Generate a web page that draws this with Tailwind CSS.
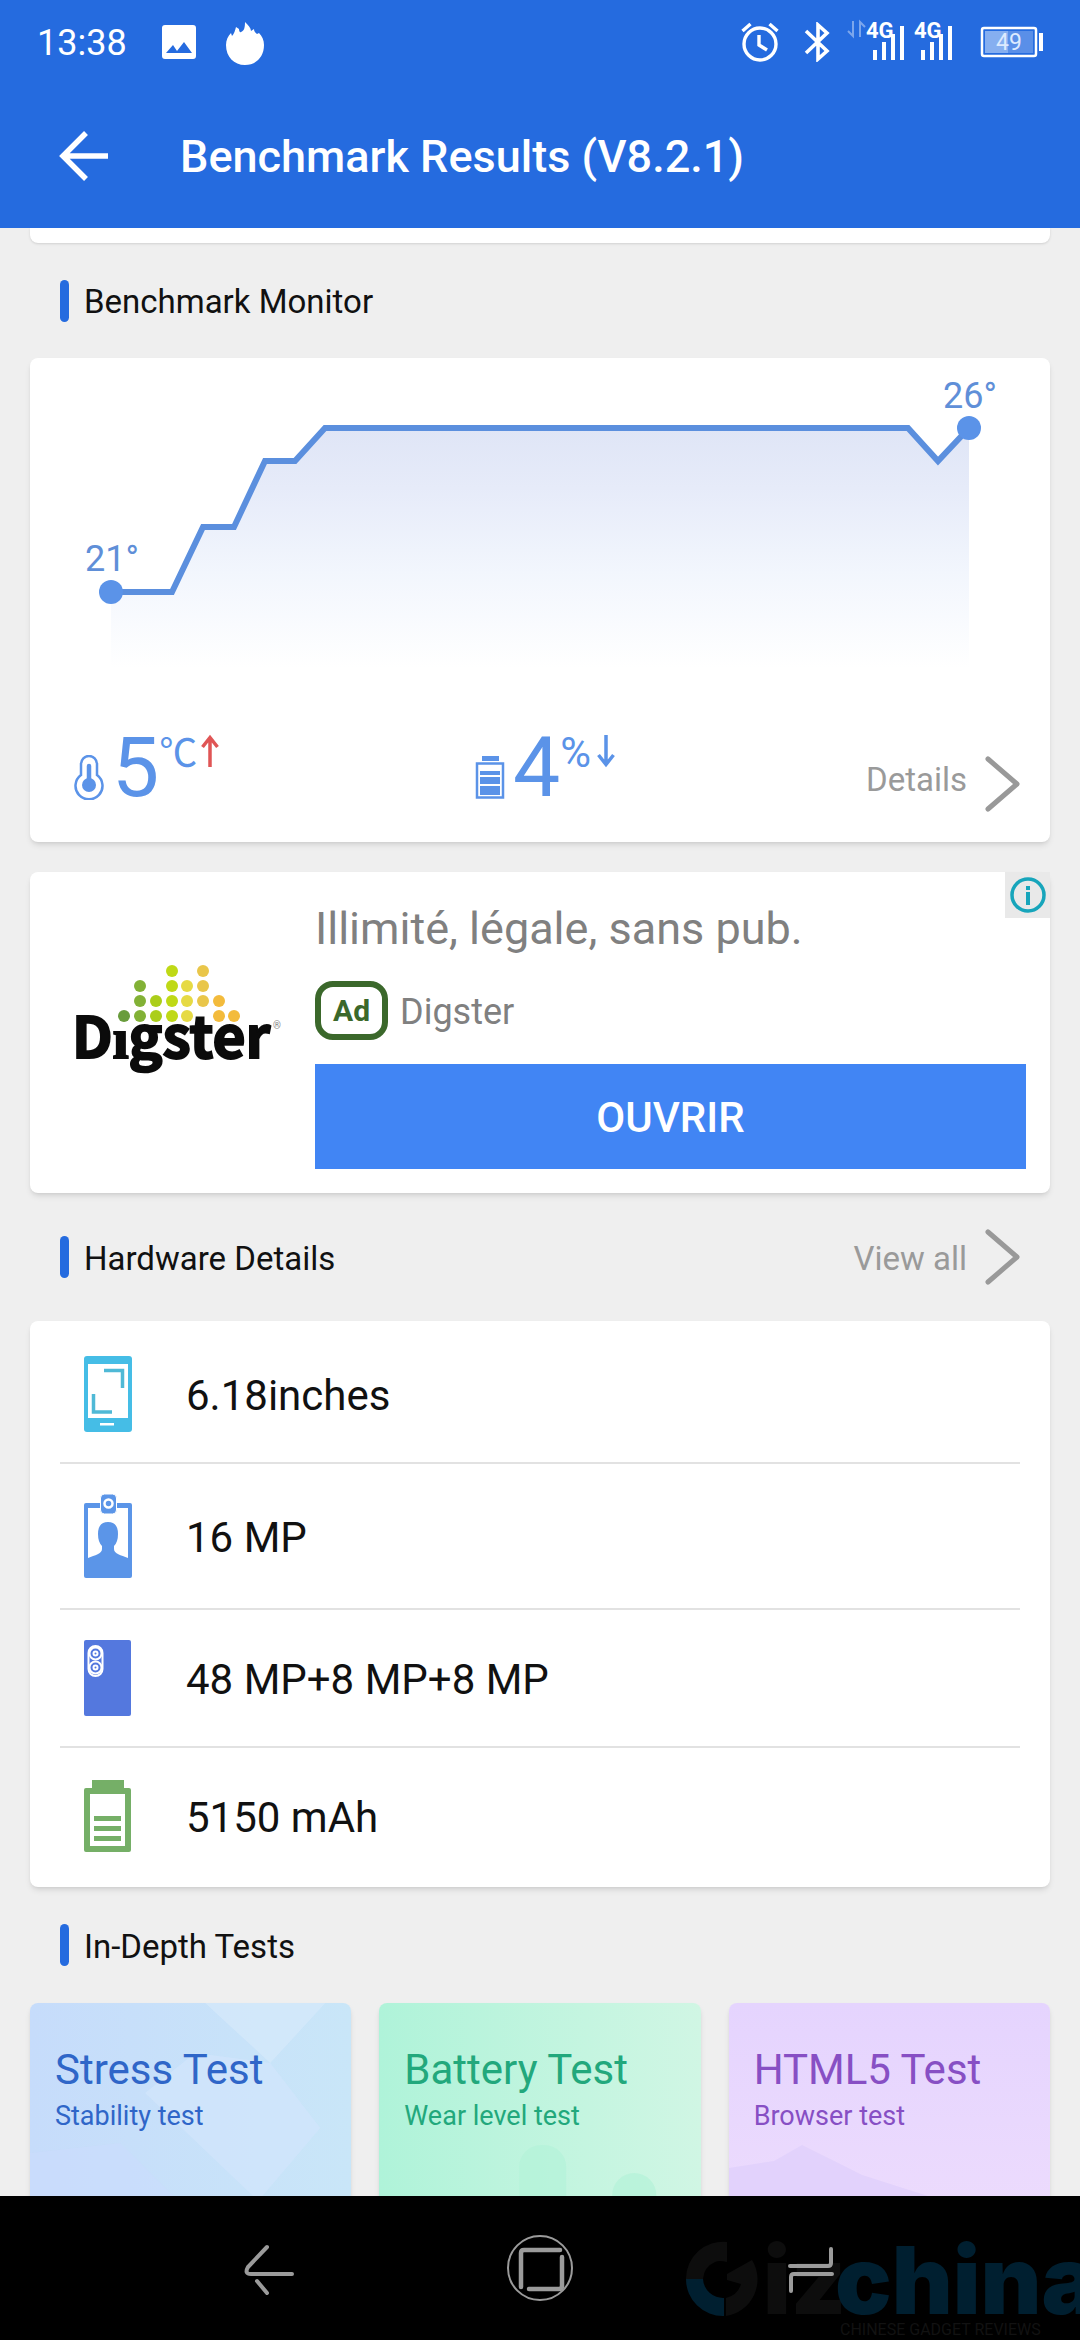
<!DOCTYPE html>
<html lang="en">
<head>
<meta charset="utf-8">
<meta name="viewport" content="width=device-width, initial-scale=1">
<title>Benchmark Results</title>
<script src="https://cdn.jsdelivr.net/npm/@tailwindcss/browser@4"></script>
</head>
<body class="flex h-screen flex-col overflow-hidden bg-[#efefef] font-[Roboto,'Noto_Sans_CJK_SC',sans-serif] text-[#111111]">

<header class="shrink-0 bg-[#256bdf] text-white">
  <!-- Status bar -->
  <div class="flex h-[84px] items-center pl-[37px] pr-[36px]">
    <span class="pt-[2px] text-[36px] leading-[44px]">13:38</span>
    <svg class="ml-[34px] h-[36px] w-[36px]" viewBox="0 0 36 36" aria-hidden="true"><path fill="#fff" fill-rule="evenodd" d="M4 1h28q3 0 3 3v28q0 3-3 3H4q-3 0-3-3V4q0-3 3-3zM5 29h26l-8-11-7 9-4-6z"/></svg>
    <svg class="ml-[28px] h-[46px] w-[40px]" viewBox="0 0 40 46" aria-hidden="true"><path fill="#fff" d="M20 46C9 46 1 38 1 26c0-5 2-9 5-12l1 3c2-2 3-5 4-9l3 2c0 2 1 4 2 3 3-1 4-4 4-10 3 3 6 6 6 9l3-2c0 3 2 4 3 5l2-1c3 3 5 7 5 12 0 12-8 20-19 20z"/></svg>
    <div class="ml-auto flex items-center">
      <svg class="h-[40px] w-[38px]" viewBox="0 0 38 40" fill="none" stroke="#fff" stroke-width="3.4" aria-hidden="true"><circle cx="19" cy="22" r="16"/><path d="M18 13v10l8 5M1.500 9l8-7M36.500 9l-8-7"/></svg>
      <svg class="ml-[24px] h-[40px] w-[28px]" viewBox="0 0 28 40" fill="none" stroke="#fff" stroke-width="3.6" aria-hidden="true"><path d="M3 9l21 20-9 8V3l9 8L3 31"/></svg>
      <svg class="ml-[15px] h-[44px] w-[106px] overflow-visible" viewBox="0 0 106 44" aria-hidden="true">
        <g fill="none" stroke="#fff" stroke-opacity=".4" stroke-width="2"><path d="M7 1v15l-5-5M14 17V2l5 5"/></g>
        <g fill="#fff"><text x="20" y="18" font-size="22" font-weight="700">4G</text><path d="M27 30h4v10h-4zM36 22h4v18h-4zM45 14h4v26h-4zM54 6h4v34h-4z"/>
        <text x="68" y="18" font-size="22" font-weight="700">4G</text><path d="M75 30h4v10h-4zM84 22h4v18h-4zM93 14h4v26h-4zM102 6h4v34h-4z"/></g>
      </svg>
      <svg class="ml-[28px] h-[32px] w-[64px]" viewBox="0 0 64 32" aria-hidden="true"><rect x="2" y="2" width="54" height="28" rx="2" fill="none" stroke="#fff" stroke-width="2.500"/><path fill="#86aff0" d="M5 5h23v22H5z"/><path fill="#5a8fe8" d="M28 5h25v22H28z"/><path fill="#fff" d="M59 7h4v18h-4z"/><text x="29" y="24" font-size="23" text-anchor="middle" fill="#dceaff">49</text></svg>
    </div>
  </div>
  <!-- App bar -->
  <div class="flex h-[144px] items-center pl-[58px]">
    <button type="button" aria-label="Back" class="h-[52px] w-[52px]"><svg class="h-[52px] w-[52px]" viewBox="0 0 52 52" fill="none" stroke="#fff" stroke-width="5.500" aria-hidden="true"><path d="M50 26H6M28 3L5 26l23 23"/></svg></button>
    <h1 class="ml-[70px] pt-[2px] text-[45px] leading-[56px] font-medium">Benchmark Results (V8.2.1)</h1>
  </div>
</header>

<main class="min-h-0 flex-1 overflow-hidden px-[30px]">
  <div class="h-[15px] rounded-b-lg bg-white shadow"></div>

  <div class="flex h-[115px] items-center pl-[30px]">
    <span class="h-[42px] w-[9px] rounded-full bg-[#256bdf]"></span>
    <h2 class="ml-[15px] pt-[3px] text-[33px] leading-[40px]">Benchmark Monitor</h2>
  </div>

  <section class="rounded-lg bg-white shadow-md">
    <svg class="block h-auto w-full" viewBox="0 0 1020 320" role="img" aria-label="Temperature rising from 21 to 26 degrees">
      <defs><linearGradient id="area" x1="0" y1="70" x2="0" y2="310" gradientUnits="userSpaceOnUse"><stop offset="0" stop-color="#dfe5f6"/><stop offset=".25" stop-color="#e6ebf9"/><stop offset=".6" stop-color="#f2f6fd"/><stop offset="1" stop-color="#ffffff"/></linearGradient></defs>
      <path fill="url(#area)" d="M81 234h61l31-65h31l31-66h30l30-33h583l30 33 31-33v240H81z"/>
      <path fill="none" stroke="#5b8fde" stroke-width="6" d="M81 234h61l31-65h31l31-66h30l30-33h583l30 33 31-33"/>
      <g fill="#5b93e8"><circle cx="81" cy="234" r="12"/><circle cx="939" cy="70" r="12"/></g>
      <g fill="#5f8fd8" font-size="36"><text x="55" y="213">21°</text><text x="913" y="50">26°</text></g>
    </svg>
    <div class="grid grid-cols-[401fr_391fr_auto] pt-[60px] pr-[30px] pb-[30px] pl-[44px] text-[#5b93e8]">
      <div class="flex items-start">
        <svg class="mt-[17px] h-[45px] w-[30px]" viewBox="0 0 30 45" aria-hidden="true"><path fill="none" stroke="#5b93e8" stroke-width="2.500" d="M7 20V9a8 8 0 0 1 16 0v11a13.500 13.500 0 1 1-16 0z"/><circle cx="15" cy="30" r="7" fill="#5b93e8"/><path stroke="#5b93e8" stroke-width="4.500" stroke-linecap="round" d="M15 11v17"/></svg>
        <span class="ml-[8px] text-[84px] leading-[60px]">5</span>
        <span class="text-[38px] leading-[30px]">℃</span>
        <svg class="-mt-1 ml-[4px] h-[34px] w-[18px]" viewBox="0 0 18 34" fill="none" stroke="#e05555" stroke-width="3.500" aria-hidden="true"><path d="M9 33V4M1.500 13L9 3.500l7.500 9.500"/></svg>
      </div>
      <div class="flex items-start">
        <svg class="mt-[17px] h-[45px] w-[30px]" viewBox="0 0 30 45" fill="#5b93e8" aria-hidden="true"><path d="M7 1h17v5H7z"/><path fill="none" stroke="#5b93e8" stroke-width="2.500" d="M2 8.500h26v34H2z"/><path d="M5 16h20v4H5zM5 22h20v7H5zM5 31h20v9H5z"/></svg>
        <span class="ml-[8px] text-[84px] leading-[60px]">4</span>
        <span class="text-[42px] leading-[30px]">%</span>
        <svg class="-mt-1 ml-[6px] h-[34px] w-[18px]" viewBox="0 0 18 34" fill="none" stroke="#5b93e8" stroke-width="3.500" aria-hidden="true"><path d="M9 1v29M1.500 21L9 30.500l7.500-9.500"/></svg>
      </div>
      <a href="#details" class="flex items-center pt-[18px] text-[#9a9a9a]">
        <span class="pb-[8px] text-[33px] leading-[40px]">Details</span>
        <svg class="ml-[17px] h-[56px] w-[36px]" viewBox="0 0 36 56" fill="none" stroke="#999" stroke-width="5" stroke-linecap="round" stroke-linejoin="round" aria-hidden="true"><path d="M4 3l29 25L4 53"/></svg>
      </a>
    </div>
  </section>

  <section class="relative mt-[30px] flex rounded-lg bg-white pt-[29px] pr-[24px] pb-[24px] shadow-md">
    <svg class="mt-[54px] mr-[30px] ml-[40px] h-[130px] w-[215px] shrink-0" viewBox="0 0 215 130" role="img" aria-label="Digster">
      <text x="2" y="103" font-family="Noto Sans CJK SC" font-weight="700" font-size="57" fill="#0b0b0b" stroke="#0b0b0b" stroke-width="2">Dıgster</text>
      <text x="207" y="74" font-size="10" text-anchor="middle" fill="#888">®</text>
      <g fill="#699c3c"><circle cx="54" cy="61" r="6"/></g>
      <g fill="#82b136"><circle cx="70" cy="61" r="6"/><circle cx="70" cy="46" r="6"/><circle cx="70" cy="31" r="6"/></g>
      <g fill="#abce1a"><circle cx="86" cy="61" r="6"/><circle cx="86" cy="46" r="6"/></g>
      <g fill="#bfd916"><circle cx="102" cy="61" r="6"/><circle cx="102" cy="46" r="6"/><circle cx="102" cy="31" r="6"/><circle cx="102" cy="16" r="6"/></g>
      <g fill="#e6da44"><circle cx="117" cy="61" r="6"/><circle cx="117" cy="46" r="6"/><circle cx="117" cy="31" r="6"/></g>
      <g fill="#e9c64a"><circle cx="133" cy="46" r="6"/><circle cx="133" cy="31" r="6"/><circle cx="133" cy="16" r="6"/></g>
      <g fill="#f3bb3c"><circle cx="149" cy="61" r="6"/><circle cx="149" cy="46" r="6"/><circle cx="164" cy="61" r="6"/></g>
    </svg>
    <div class="min-w-0 flex-1">
      <p class="text-[45px] leading-[56px] text-[#808080]">Illimité, légale, sans pub.</p>
      <div class="mt-[24px] flex items-center">
        <span class="flex h-[59px] w-[73px] items-center justify-center rounded-[18px] border-[6px] border-[#3b682b] text-[30px] leading-[36px] font-bold text-[#3b682b]">Ad</span>
        <span class="ml-[12px] pt-[2px] text-[36px] leading-[44px] text-[#808080]">Digster</span>
      </div>
      <button type="button" class="mt-[24px] block h-[105px] w-full bg-[#4185f4] pt-[2px] text-[42px] leading-[50px] font-medium text-white">OUVRIR</button>
    </div>
    <button type="button" aria-label="Ad information" class="absolute top-0 right-0 flex h-[46px] w-[45px] items-center justify-center bg-[#e9e9e9]"><svg class="h-[38px] w-[38px]" viewBox="0 0 38 38" aria-hidden="true"><circle cx="19" cy="19" r="16" fill="none" stroke="#17a5bb" stroke-width="3.500"/><path fill="#17a5bb" d="M17 10h4v4h-4zM17 16h4v13h-4z"/></svg></button>
  </section>

  <div class="flex h-[128px] items-center pr-[30px] pl-[30px]">
    <span class="h-[42px] w-[9px] rounded-full bg-[#256bdf]"></span>
    <h2 class="ml-[15px] pt-[3px] text-[33px] leading-[40px]">Hardware Details</h2>
    <a href="#hardware" class="ml-auto flex items-center text-[#9a9a9a]">
      <span class="pt-[3px] text-[33px] leading-[40px]">View all</span>
      <svg class="ml-[17px] h-[56px] w-[36px]" viewBox="0 0 36 56" fill="none" stroke="#999" stroke-width="5" stroke-linecap="round" stroke-linejoin="round" aria-hidden="true"><path d="M4 3l29 25L4 53"/></svg>
    </a>
  </div>

  <ul class="rounded-lg bg-white px-[30px] pt-[4px] text-[42px] leading-[50px] shadow-md">
    <li class="flex h-[139px] items-center border-b-2 border-[#e2e2e2] pl-[24px]">
      <svg class="h-[76px] w-[48px]" viewBox="0 0 48 76" aria-hidden="true"><rect width="48" height="76" rx="3" fill="#45bde6"/><path fill="#fff" d="M4 8h40v54H4zM16 67h14v2.500H16z"/><path fill="none" stroke="#4fb9d6" stroke-width="3.500" d="M20 14.500h18.500V32M9.500 38v18H28"/></svg>
      <span class="ml-[54px] pt-[4px]">6.18inches</span>
    </li>
    <li class="flex h-[146px] items-center border-b-2 border-[#e2e2e2] pl-[24px]">
      <svg class="h-[84px] w-[48px]" viewBox="0 0 48 84" aria-hidden="true"><rect y="9" width="48" height="75" rx="2" fill="#5b95e8"/><path fill="#fff" d="M4 14h40v50c-7-3-14-4-14-9v-3q4-4 4-12 0-12-10-12t-10 12q0 8 4 12v3c0 5-7 6-14 9z"/><rect x="16.500" y="0" width="16" height="20" rx="4" fill="#5b95e8" stroke="#fff" stroke-width="1"/><circle cx="24.500" cy="9.500" r="4" fill="#5b95e8" stroke="#fff" stroke-width="2.500"/></svg>
      <span class="ml-[54px] pt-[4px]">16 MP</span>
    </li>
    <li class="flex h-[138px] items-center border-b-2 border-[#e2e2e2] pl-[24px]">
      <svg class="h-[76px] w-[48px]" viewBox="0 0 48 76" aria-hidden="true"><rect width="47" height="76" rx="2" fill="#5478de"/><g fill="none" stroke="#fff" stroke-width="2"><rect x="4.500" y="6" width="14" height="30" rx="7"/><circle cx="11.500" cy="13.500" r="6"/><circle cx="11.500" cy="27.500" r="6"/><circle cx="11.500" cy="13.500" r="2"/><circle cx="11.500" cy="27.500" r="2"/></g></svg>
      <span class="ml-[54px] pt-[4px]">48 MP+8 MP+8 MP</span>
    </li>
    <li class="flex h-[139px] items-center pb-[4px] pl-[24px]">
      <svg class="h-[72px] w-[48px]" viewBox="0 0 48 72" fill="#75af67" aria-hidden="true"><path d="M8 0h32v12H8z"/><path fill-rule="evenodd" d="M2 8h43q2 0 2 2v60q0 2-2 2H2q-2 0-2-2V10q0-2 2-2zm4 6v52h35V14z"/><path d="M10 36h27v5H10zM10 46h27v5H10zM10 56h27v5H10z"/></svg>
      <span class="ml-[54px] pt-[4px]">5150 mAh</span>
    </li>
  </ul>

  <div class="flex h-[116px] items-center pl-[30px]">
    <span class="h-[42px] w-[9px] rounded-full bg-[#256bdf]"></span>
    <h2 class="ml-[15px] pt-[3px] text-[33px] leading-[40px]">In-Depth Tests</h2>
  </div>

  <div class="grid grid-cols-3 gap-[28px]">
    <a href="#stress" class="relative block h-[260px] overflow-hidden rounded-lg bg-linear-to-r from-[#c6dcfb] to-[#c9e6f8] text-[#2f66c8] shadow-md">
      <svg class="absolute inset-0 h-full w-full" viewBox="0 0 321 260" preserveAspectRatio="none" aria-hidden="true"><path fill="#d5e8fa" d="M175 0h120l-55 60z" opacity=".8"/><path fill="#d1e5fb" d="M115 90l50-40 75 10 50 65-62 73z" opacity=".8"/><path fill="#cbdcfd" d="M0 150l90-10 60 60H0z" opacity=".5"/></svg>
      <span class="relative block px-[25px] pt-[42px] text-[42px] leading-[50px]">Stress Test</span>
      <span class="relative block px-[25px] pt-[4px] text-[27px] leading-[34px]">Stability test</span>
    </a>
    <a href="#battery" class="relative block h-[260px] overflow-hidden rounded-lg bg-linear-to-r from-[#aff3d9] to-[#d0f6e4] text-[#22a87c] shadow-md">
      <svg class="absolute inset-0 h-full w-full" viewBox="0 0 321 260" preserveAspectRatio="none" aria-hidden="true"><g fill="#b3f2d9"><rect x="140" y="142" width="47" height="118" rx="22" opacity=".7"/><rect x="233" y="170" width="44" height="90" rx="22" opacity=".7"/></g></svg>
      <span class="relative block px-[25px] pt-[42px] text-[42px] leading-[50px]">Battery Test</span>
      <span class="relative block px-[25px] pt-[4px] text-[27px] leading-[34px]">Wear level test</span>
    </a>
    <a href="#html5" class="relative block h-[260px] overflow-hidden rounded-lg bg-linear-to-b from-[#e5d4fe] to-[#eeddfd] text-[#874fc4] shadow-md">
      <svg class="absolute inset-0 h-full w-full" viewBox="0 0 321 260" preserveAspectRatio="none" aria-hidden="true"><path fill="#e2d2fc" d="M0 165l45-7 28-16 60 30 188 60v28H0z"/></svg>
      <span class="relative block px-[25px] pt-[42px] text-[42px] leading-[50px]">HTML5 Test</span>
      <span class="relative block px-[25px] pt-[4px] text-[27px] leading-[34px]">Browser test</span>
    </a>
  </div>
</main>

<nav class="relative flex h-[144px] shrink-0 items-center justify-center gap-[203px] overflow-hidden bg-black" aria-label="System">
  <!-- Site watermark -->
  <svg class="absolute top-[40px] right-0 h-[104px] w-[400px]" viewBox="0 0 400 104" aria-hidden="true">
    <path fill="#0d0d0d" d="M47 6A37 37 0 0 0 6 43h17a20 20 0 0 1 12-17q4-2 12 0zM46 80V62q12-3 15-14l-14-4V38l25-14a37 37 0 0 1-26 56z"/>
    <path fill="#001f30" d="M6 43a37 37 0 0 0 38 37V62a20 20 0 0 1-21-19z"/>
    <g font-family="Inter" font-weight="900" font-size="94"><text x="83" y="78" fill="#0d0d0d">iz</text><text x="155" y="78" fill="#001f30">china</text></g>
    <text x="160" y="99" font-size="16" fill="#121212">CHINESE GADGET REVIEWS</text>
  </svg>
  <button type="button" aria-label="Back" class="relative flex w-[68px] justify-center"><svg class="h-[66px] w-[52px]" viewBox="0 0 52 66" fill="none" stroke="#9b9b9b" stroke-width="4" stroke-linecap="round" aria-hidden="true"><path d="M24 12L5 32q-4 7 3 7h41M14 46l10 12"/></svg></button>
  <button type="button" aria-label="Home" class="relative flex w-[68px] justify-center"><svg class="h-[68px] w-[68px]" viewBox="0 0 68 68" fill="none" stroke="#9b9b9b" aria-hidden="true"><circle cx="34" cy="34" r="32" stroke-width="2"/><path stroke-width="4.500" stroke-linecap="round" d="M15 53V19q0-3 3-3h36M23 55h30q3 0 3-3V23"/></svg></button>
  <button type="button" aria-label="Recent apps" class="relative flex w-[68px] justify-center"><svg class="h-[66px] w-[46px]" viewBox="0 0 46 66" fill="none" stroke="#9b9b9b" stroke-width="4" stroke-linecap="round" aria-hidden="true"><path d="M2 31h38q3 0 3-3V14M44 39H6q-3 0-3 3v14"/></svg></button>
</nav>
</body>
</html>
